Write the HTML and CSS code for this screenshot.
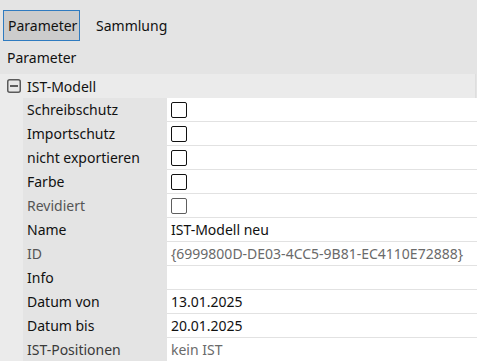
FILE: index.html
```html
<!DOCTYPE html>
<html lang="de">
<head>
<meta charset="utf-8">
<link rel="stylesheet" href="styles.css">
</head>
<body>
<div class="tabs">
  <div class="tab active">Parameter</div>
  <div class="tab">Sammlung</div>
</div>
<div class="title">Parameter</div>
<div class="grid">
  <div class="group">
    <span class="toggle"><svg width="14" height="14" viewBox="0 0 14 14"><rect x="0.75" y="0.75" width="12.5" height="12.5" rx="2" fill="#e8e8e8" stroke="#5a5a5a" stroke-width="1.5"/><line x1="3" y1="7" x2="11" y2="7" stroke="#3a3a3a" stroke-width="1.6"/></svg></span>
    <span>IST-Modell</span>
  </div>
  <div class="body">
    <div class="indent"></div>
    <div class="rows">
      <div class="row"><div class="label">Schreibschutz</div><div class="value"><span class="check"></span></div></div>
      <div class="row"><div class="label">Importschutz</div><div class="value"><span class="check"></span></div></div>
      <div class="row"><div class="label">nicht exportieren</div><div class="value"><span class="check"></span></div></div>
      <div class="row"><div class="label">Farbe</div><div class="value"><span class="check"></span></div></div>
      <div class="row"><div class="label dim">Revidiert</div><div class="value"><span class="check disabled"></span></div></div>
      <div class="row"><div class="label">Name</div><div class="value">IST-Modell neu</div></div>
      <div class="row"><div class="label dim">ID</div><div class="value dim">{6999800D-DE03-4CC5-9B81-EC4110E72888}</div></div>
      <div class="row"><div class="label">Info</div><div class="value"></div></div>
      <div class="row"><div class="label">Datum von</div><div class="value">13.01.2025</div></div>
      <div class="row"><div class="label">Datum bis</div><div class="value">20.01.2025</div></div>
      <div class="row"><div class="label dark">IST-Positionen</div><div class="value dim">kein IST</div></div>
    </div>
  </div>
</div>
</body>
</html>
```
FILE: styles.css
```css
html, body {
  margin: 0;
  padding: 0;
  background: #e4e4e4;
  font-family: "Noto Sans", "Open Sans", sans-serif;
  font-size: 14px;
  color: #111111;
  overflow: hidden;
}
.tabs {
  display: flex;
  align-items: center;
  padding: 9px 0 0 3px;
  height: 32px;
  gap: 10px;
}
.tab {
  height: 31px;
  box-sizing: border-box;
  padding: 0 5px;
  line-height: 29px;
  border: 1px solid transparent;
}
.tab.active {
  width: 77px;
  padding: 0 4px;
  background: #cccccc;
  border-color: #2f7bc0;
}
.title {
  height: 33px;
  line-height: 33px;
  padding-left: 7px;
}
.group {
  height: 24px;
  background: #ebebeb;
  display: flex;
  align-items: center;
  gap: 6px;
  padding-left: 7px;
  margin-right: 1px;
  border-right: 1px solid #dedede;
}
.toggle {
  display: flex;
  align-items: center;
}
.body {
  display: flex;
}
.indent {
  width: 23px;
  background: #ebebeb;
}
.rows {
  flex: 1;
}
.row {
  display: flex;
  height: 24px;
}
.label {
  width: 140px;
  padding-left: 4px;
  line-height: 23px;
  background: #e4e4e4;
  white-space: nowrap;
}
.value {
  flex: 1;
  background: #ffffff;
  border-bottom: 1px solid #e2e2e2;
  padding-left: 4px;
  line-height: 23px;
  display: flex;
  align-items: center;
  white-space: nowrap;
}
.dim {
  color: #6a6a6a;
}
.label.dim {
  color: #555555;
}
.label.dark {
  color: #3a3a3a;
}
.check {
  width: 14px;
  height: 14px;
  border: 1.5px solid #111;
  border-radius: 2px;
  background: #fff;
  margin-top: 1px;
}
.check.disabled {
  border-color: #5e5e5e;
}
```
